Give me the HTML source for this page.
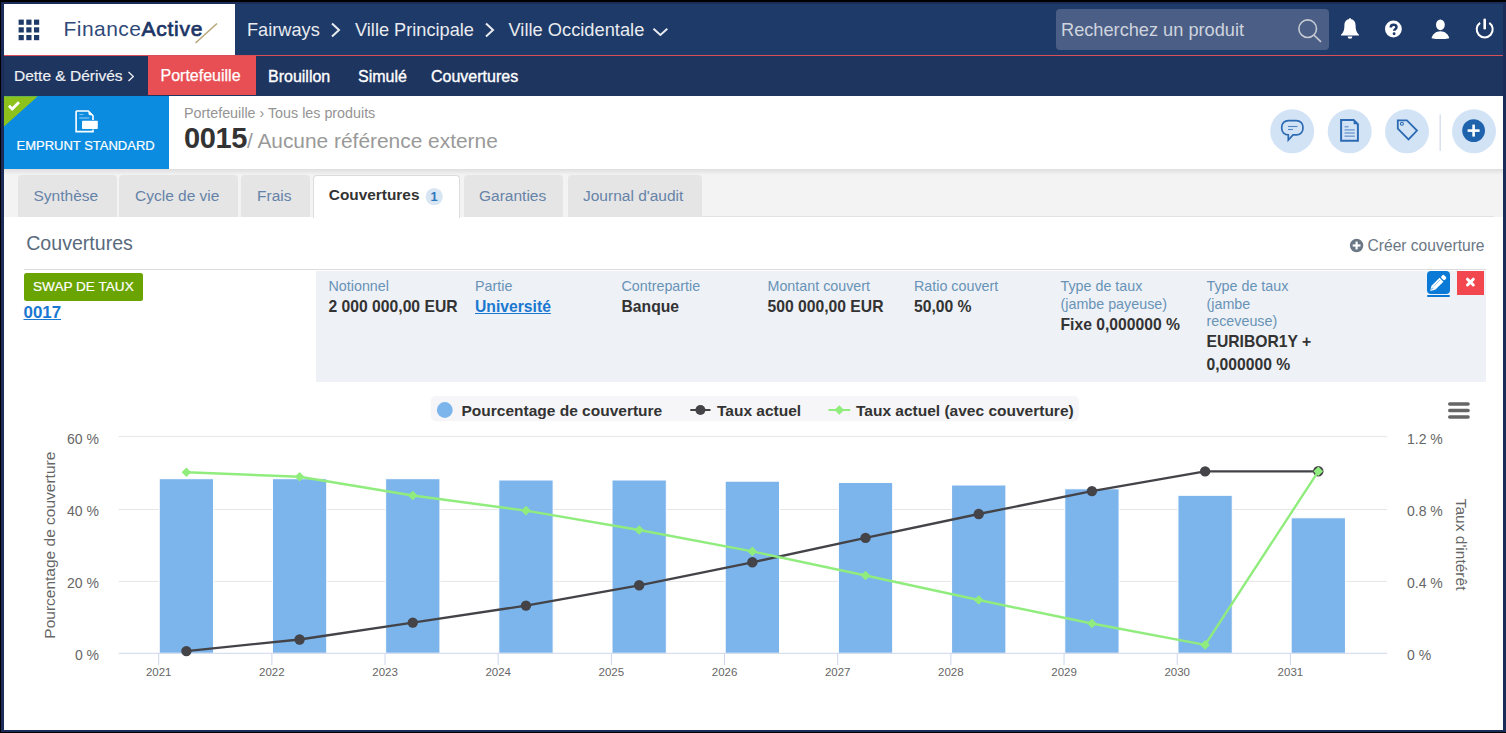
<!DOCTYPE html>
<html><head><meta charset="utf-8">
<style>
html,body{margin:0;padding:0;}
body{width:1506px;height:733px;background:#000;position:relative;overflow:hidden;font-family:"Liberation Sans",sans-serif;}
.a{position:absolute;white-space:nowrap;}
#frame{position:absolute;left:1px;top:2px;width:1505px;height:730px;background:#1b2c59;}
#page{position:absolute;left:4px;top:4px;width:1499px;height:725.5px;background:#fff;overflow:hidden;}
/* everything inside uses page coords via .p wrapper offset */
#c{position:absolute;left:-4px;top:-4px;width:1506px;height:733px;}
#hdr{position:absolute;left:0;top:0;width:1506px;height:55px;background:#1e3a68;}
#logo{position:absolute;left:0;top:0;width:234.6px;height:55px;background:#fff;}
#redline{position:absolute;left:0;top:55px;width:1506px;height:1.2px;background:#d94f57;}
#sub{position:absolute;left:0;top:56.2px;width:1506px;height:39.8px;background:#1e355f;}
#tabbar{position:absolute;left:0;top:169px;width:1506px;height:47.5px;background:#f3f3f3;}
#tabshadow{position:absolute;left:0;top:169px;width:1506px;height:6px;background:linear-gradient(#dedede,#f3f3f3);}
.tab{position:absolute;top:175px;height:41.5px;background:#e5e5e5;border-radius:4px 4px 0 0;}
.lab{font-size:14.3px;line-height:17.7px;color:#6893b6;top:278px;}
.val{font-size:15.7px;line-height:16px;color:#333;font-weight:bold;}
.tabt{position:absolute;font-size:15.5px;line-height:16px;color:#6583a8;top:188px;}
</style></head>
<body>
<div id="frame"></div>
<div id="page"><div id="c">
  <div id="hdr"></div>
  <div id="logo"></div>
  <div id="redline"></div>
  <div id="sub"></div>

  <!-- grid icon -->
  <svg class="a" style="left:0;top:0" width="60" height="55">
    <g fill="#1e3a68">
      <rect x="18.6" y="19.6" width="5.2" height="5.2"/><rect x="26.3" y="19.6" width="5.2" height="5.2"/><rect x="34" y="19.6" width="5.2" height="5.2"/>
      <rect x="18.6" y="27.3" width="5.2" height="5.2"/><rect x="26.3" y="27.3" width="5.2" height="5.2"/><rect x="34" y="27.3" width="5.2" height="5.2"/>
      <rect x="18.6" y="35" width="5.2" height="5.2"/><rect x="26.3" y="35" width="5.2" height="5.2"/><rect x="34" y="35" width="5.2" height="5.2"/>
    </g>
  </svg>
  <div class="a" style="left:63.5px;top:17.6px;font-size:21px;line-height:21px;color:#2f4a79;letter-spacing:0.45px">Finance<span style="color:#1c3565;letter-spacing:0.75px;-webkit-text-stroke:0.7px #1c3565">Active</span></div>
  <svg class="a" style="left:0;top:0" width="234" height="55"><line x1="195.5" y1="43" x2="217" y2="23.5" stroke="#b9a77a" stroke-width="1.6"/></svg>
  <div class="a" style="left:247px;top:21.2px;font-size:18.2px;line-height:18px;color:#e9ebf0">Fairways</div>
  <svg class="a" style="left:0;top:0" width="700" height="55" fill="none" stroke="#e9ebf0" stroke-width="2">
    <polyline points="332,23.5 339,30 332,36.5"/>
    <polyline points="486,23.5 493,30 486,36.5"/>
    <polyline points="653.5,28.8 660.4,35 667.3,28.8"/>
  </svg>
  <div class="a" style="left:355px;top:21.2px;font-size:18.2px;line-height:18px;color:#e9ebf0">Ville Principale</div>
  <div class="a" style="left:508.5px;top:21.2px;font-size:18.3px;line-height:18px;color:#e9ebf0">Ville Occidentale</div>
  <!-- search -->
  <div class="a" style="left:1055.5px;top:9.3px;width:273.5px;height:40.5px;background:#4b5f86;border-radius:4px"></div>
  <div class="a" style="left:1061px;top:21.2px;font-size:18.2px;line-height:18px;color:#cfd4de">Recherchez un produit</div>
  <svg class="a" style="left:1290px;top:10px" width="40" height="40" fill="none" stroke="#c5c9d2" stroke-width="1.4">
    <circle cx="17.7" cy="18.7" r="8.8" stroke-width="1.6"/><line x1="23.8" y1="25" x2="31" y2="31.8" stroke-width="1.7"/>
  </svg>
  <!-- bell -->
  <svg class="a" style="left:1336px;top:14px" width="28" height="28" fill="#fff">
    <path d="M14 4.2c0.7 0 1.2 0.5 1.2 1.1c3.2 0.6 4.4 3.2 4.4 6.3c0 4.2 0.8 6.9 3.4 9.2v0.6H5v-0.6c2.6-2.3 3.4-5 3.4-9.2c0-3.1 1.2-5.7 4.4-6.3c0-0.6 0.5-1.1 1.2-1.1z"/>
    <path d="M11.6 22.4h4.8a2.4 2.4 0 0 1-4.8 0z"/>
  </svg>
  <!-- help -->
  <svg class="a" style="left:1380px;top:16px" width="28" height="28">
    <circle cx="13.4" cy="13" r="8.4" fill="#fff"/>
    <path d="M10.7 11.6c0-1.9 1.2-2.9 2.9-2.9c1.7 0 2.9 1 2.9 2.5c0 1.9-2.4 2-2.4 3.6" fill="none" stroke="#1e3a68" stroke-width="2.5"/>
    <circle cx="14.1" cy="17.7" r="1.45" fill="#1e3a68"/>
  </svg>
  <!-- user -->
  <svg class="a" style="left:1426px;top:15px" width="30" height="28" fill="#fff">
    <ellipse cx="14.4" cy="9.8" rx="4.4" ry="5.4"/>
    <path d="M5.5 23.2c1-4.2 4.6-7 8.9-7s7.9 2.8 8.9 7c-2.6 0.6-5.6 0.9-8.9 0.9s-6.3-0.3-8.9-0.9z"/>
  </svg>
  <!-- power -->
  <svg class="a" style="left:1470px;top:14px" width="30" height="30" fill="none" stroke="#fff">
    <path d="M10.11 8.85A8 8 0 1 0 19.29 8.85" stroke-width="2"/>
    <line x1="14.7" y1="5.8" x2="14.7" y2="14.3" stroke-width="2.6" stroke-linecap="round"/>
  </svg>
  <!-- subnav -->
  <div class="a" style="left:148px;top:56.2px;width:108px;height:38.6px;background:#e84f55"></div>
  <div class="a" style="left:14px;top:68px;font-size:15.5px;line-height:16px;color:#eef0f4;-webkit-text-stroke:0.2px #eef0f4">Dette &amp; Dérivés</div>
  <svg class="a" style="left:0;top:56px" width="200" height="40" fill="none" stroke="#eef0f4" stroke-width="1.3"><polyline points="128.5,16 133.3,20.5 128.5,25"/></svg>
  <div class="a" style="left:160.5px;top:68px;font-size:16px;line-height:16px;color:#fff;-webkit-text-stroke:0.25px #fff">Portefeuille</div>
  <div class="a" style="left:268px;top:68.5px;font-size:16px;line-height:16px;color:#fff;-webkit-text-stroke:0.35px #fff;letter-spacing:0px">Brouillon</div>
  <div class="a" style="left:358px;top:68.5px;font-size:16px;line-height:16px;color:#fff;-webkit-text-stroke:0.35px #fff;letter-spacing:0px">Simulé</div>
  <div class="a" style="left:431px;top:68.5px;font-size:16px;line-height:16px;color:#fff;-webkit-text-stroke:0.35px #fff;letter-spacing:0px">Couvertures</div>

  <!-- page header -->
  <div class="a" style="left:0;top:95.8px;width:169px;height:73.2px;background:#0b8ce0"></div>
  <svg class="a" style="left:0;top:95.5px" width="169" height="74">
    <polygon points="0,0.3 37.8,0.3 0,34" fill="#8cc21b"/>
    <polyline points="9,9.8 12.2,13 19,6.2" fill="none" stroke="#fff" stroke-width="2.8"/>
    <g fill="none" stroke="#fff" stroke-width="1.6">
      <path d="M76.1 15h12.2l4.7 4.8v4.2M93 33.5v2.1H76.1V15"/>
    </g>
    <rect x="82" y="24.7" width="15.8" height="8.4" rx="0.8" fill="#fff"/>
    <path d="M88.5 14.6l4.6 4.6h-3.2a1.4 1.4 0 0 1-1.4-1.4z" fill="#fff"/>
    <line x1="79.3" y1="18.5" x2="83.5" y2="18.5" stroke="#fff" stroke-opacity="0.45" stroke-width="1.1"/>
    <line x1="79.3" y1="22" x2="89.3" y2="22" stroke="#fff" stroke-opacity="0.55" stroke-width="1.1"/>
  </svg>
  <div class="a" style="left:16.5px;top:138.5px;font-size:13px;line-height:13px;color:#fff;-webkit-text-stroke:0.2px #fff">EMPRUNT STANDARD</div>
  <div class="a" style="left:184px;top:105.5px;font-size:14.3px;line-height:14px;color:#949494">Portefeuille › Tous les produits</div>
  <div class="a" style="left:184px;top:124.2px;font-size:29px;line-height:28px;color:#333;font-weight:bold;letter-spacing:-0.4px">0015<span style="font-weight:normal;font-size:20.9px;color:#999;letter-spacing:0">/ Aucune référence externe</span></div>
  <!-- action buttons -->
  <svg class="a" style="left:1260px;top:100px" width="246" height="62">
    <g fill="#d3e3f6">
      <circle cx="32.2" cy="31.3" r="22"/><circle cx="89.7" cy="31.3" r="22"/><circle cx="147" cy="31.3" r="22"/><circle cx="214" cy="31.3" r="22"/>
    </g>
    <line x1="180.2" y1="14.6" x2="180.2" y2="50.9" stroke="#cfdbe8" stroke-width="1.2"/>
    <g fill="none" stroke="#2c6bb4" stroke-width="1.7" stroke-linejoin="miter">
      <path d="M28.25 20.55H36.45A6.5 6.5 0 0 1 42.95 27.05V28.45A6.5 6.5 0 0 1 36.45 34.95H33L28.3 40V34.95H28.25A6.5 6.5 0 0 1 21.75 28.45V27.05A6.5 6.5 0 0 1 28.25 20.55Z"/>
      <path d="M81.1 19.9h12.5l4.3 4.3v16.6h-16.8z" stroke-width="2"/>
      <path d="M137.8 20.4h9.1l10.1 10.2l-8.5 8.8l-10.7-10.7z" stroke-width="1.8"/>
      <circle cx="141.9" cy="23.7" r="1.5" stroke-width="1.1"/>
    </g>
    <path d="M93.6 19.9l4.3 4.3h-4.3z" fill="#2c6bb4"/>
    <g stroke="#2c6bb4" stroke-width="1.1" stroke-opacity="0.8"><line x1="28" y1="26.5" x2="37.5" y2="26.5"/><line x1="28" y1="29.5" x2="32.9" y2="29.5"/></g>
    <g stroke="#5f8fcb" stroke-width="1.6" stroke-opacity="0.75">
      <line x1="84.5" y1="26.7" x2="88.6" y2="26.7"/><line x1="84.5" y1="29.9" x2="94.8" y2="29.9"/><line x1="84.5" y1="33" x2="94.8" y2="33"/><line x1="84.5" y1="36.2" x2="94.8" y2="36.2"/>
    </g>
    <circle cx="213.6" cy="30.6" r="11.4" fill="#1f63ad"/>
    <g stroke="#fff" stroke-width="2.6"><line x1="213.6" y1="24.6" x2="213.6" y2="36.6"/><line x1="207.6" y1="30.6" x2="219.6" y2="30.6"/></g>
  </svg>
  <!-- tabs -->
  <div id="tabbar"></div>
  <div id="tabshadow"></div>
  <div class="a" style="left:701.6px;top:215.6px;width:792px;height:1.2px;background:#e2e2e2"></div>
  <div class="tab" style="left:17.7px;width:99px"></div>
  <div class="tab" style="left:118.9px;width:119px"></div>
  <div class="tab" style="left:241px;width:68.6px"></div>
  <div class="tab" style="left:312.5px;width:147px;background:#fff;border:1px solid #dcdcdc;border-bottom:none;height:43px;top:174.5px;box-sizing:border-box"></div>
  <div class="tab" style="left:463.7px;width:99.8px"></div>
  <div class="tab" style="left:567.7px;width:133.9px"></div>
  <div class="tabt" style="left:33.5px">Synthèse</div>
  <div class="tabt" style="left:135px">Cycle de vie</div>
  <div class="tabt" style="left:257px">Frais</div>
  <div class="tabt" style="left:328.8px;top:187.2px;color:#333;font-weight:bold;font-size:15.4px">Couvertures</div>
  <svg class="a" style="left:420px;top:185px" width="30" height="24"><circle cx="14.2" cy="11.7" r="8.6" fill="#d8e5f3"/><text x="14" y="16.3" font-size="13" font-weight="bold" text-anchor="middle" fill="#2f78bd" font-family="Liberation Sans">1</text></svg>
  <div class="tabt" style="left:479px">Garanties</div>
  <div class="tabt" style="left:583px">Journal d'audit</div>

  <!-- section -->
  <div class="a" style="left:26.2px;top:232.8px;font-size:19.6px;line-height:20px;color:#5a6a7d">Couvertures</div>
  <svg class="a" style="left:1340px;top:232px" width="30" height="28"><circle cx="16.6" cy="13.5" r="6.7" fill="#6b7785"/><g stroke="#fff" stroke-width="2.2"><line x1="16.6" y1="9.6" x2="16.6" y2="17.4"/><line x1="12.7" y1="13.5" x2="20.5" y2="13.5"/></g></svg>
  <div class="a" style="left:1367.5px;top:238px;font-size:15.6px;line-height:16px;color:#6b7785">Créer couverture</div>
  <div class="a" style="left:23.8px;top:269px;width:1462.2px;height:1px;background:#dcdcdc"></div>
  <div class="a" style="left:316px;top:271px;width:1170px;height:111px;background:#eef1f6"></div>
  <div class="a" style="left:23.8px;top:273px;width:119.4px;height:28px;background:#6aa402;border-radius:2.5px"></div>
  <div class="a" style="left:33px;top:280px;font-size:13.6px;line-height:14px;color:#fff;-webkit-text-stroke:0.2px #fff">SWAP DE TAUX</div>
  <div class="a" style="left:23.5px;top:304.3px;font-size:16.9px;line-height:17px;color:#1a78d0;font-weight:bold;text-decoration:underline">0017</div>
  <div class="lab a" style="left:328.5px">Notionnel</div>
  <div class="val a" style="left:328.5px;top:298.8px">2 000 000,00 EUR</div>
  <div class="lab a" style="left:475px">Partie</div>
  <div class="val a" style="left:475px;top:298.8px;color:#1a78d0;text-decoration:underline">Université</div>
  <div class="lab a" style="left:621.5px">Contrepartie</div>
  <div class="val a" style="left:621.5px;top:298.8px">Banque</div>
  <div class="lab a" style="left:767.5px">Montant couvert</div>
  <div class="val a" style="left:767.5px;top:298.8px">500 000,00 EUR</div>
  <div class="lab a" style="left:914px">Ratio couvert</div>
  <div class="val a" style="left:914px;top:298.8px">50,00 %</div>
  <div class="lab a" style="left:1060.5px">Type de taux<br>(jambe payeuse)</div>
  <div class="val a" style="left:1060.5px;top:316.8px">Fixe 0,000000 %</div>
  <div class="lab a" style="left:1206.5px">Type de taux<br>(jambe<br>receveuse)</div>
  <div class="val a" style="left:1206.5px;top:330px;line-height:23.1px">EURIBOR1Y +<br>0,000000 %</div>
  <!-- edit / delete -->
  <div class="a" style="left:1426.7px;top:271.2px;width:23.3px;height:23px;background:#0a7ad6;border-radius:4px"></div>
  <div class="a" style="left:1426.7px;top:295.1px;width:23.3px;height:1.8px;background:#0a78d4;border-radius:1px"></div>
  <svg class="a" style="left:1426px;top:271px" width="24" height="24">
    <g transform="translate(4.3,19.9) rotate(-45)" fill="#fff">
      <polygon points="0,0 4.2,-2.75 4.2,2.75"/>
      <rect x="4.2" y="-2.75" width="11.6" height="5.5"/>
      <rect x="17" y="-2.6" width="3.9" height="5.2" rx="1.6"/>
      <line x1="5.5" y1="-0.9" x2="14.5" y2="-0.9" stroke="#6fb0ea" stroke-width="0.7"/>
      <line x1="1.8" y1="-0.3" x2="3.4" y2="-0.3" stroke="#3b8fdc" stroke-width="1"/>
    </g>
  </svg>
  <div class="a" style="left:1457px;top:271.1px;width:26.9px;height:23.9px;background:#f2474f"></div>
  <svg class="a" style="left:1457px;top:271px" width="27" height="24"><g stroke="#fff" stroke-width="3" stroke-linecap="round"><line x1="10.5" y1="8.2" x2="16.3" y2="14"/><line x1="16.3" y1="8.2" x2="10.5" y2="14"/></g></svg>
<!-- chart -->
<svg class="a" style="left:0;top:0" width="1506" height="733" font-family="Liberation Sans">
<rect x="430.8" y="396" width="648.1" height="25.3" rx="5" fill="#f6f6f8"/>
<circle cx="444.8" cy="410" r="7.9" fill="#7cb5ec"/>
<g font-size="15.5" font-weight="bold" fill="#333">
<text x="461.5" y="415.7">Pourcentage de couverture</text>
<text x="717" y="415.7">Taux actuel</text>
<text x="856" y="415.7">Taux actuel (avec couverture)</text>
</g>
<line x1="690.3" y1="410" x2="710.5" y2="410" stroke="#434348" stroke-width="2"/><circle cx="700.4" cy="410" r="5" fill="#434348"/>
<line x1="828.4" y1="410" x2="850.2" y2="410" stroke="#90ed7d" stroke-width="2"/><path d="M839.3 405.2l4.8 4.8l-4.8 4.8l-4.8-4.8z" fill="#90ed7d"/>
<g stroke="#666" stroke-width="3.4" stroke-linecap="round"><line x1="1449.7" y1="404" x2="1468.1" y2="404"/><line x1="1449.7" y1="410.5" x2="1468.1" y2="410.5"/><line x1="1449.7" y1="417" x2="1468.1" y2="417"/></g>
<line x1="118.7" y1="436.6" x2="1387" y2="436.6" stroke="#e6e6e6" stroke-width="1"/>
<line x1="118.7" y1="509.5" x2="1387" y2="509.5" stroke="#e6e6e6" stroke-width="1"/>
<line x1="118.7" y1="581.4" x2="1387" y2="581.4" stroke="#e6e6e6" stroke-width="1"/>
<rect x="159.25" y="478.70" width="54.30" height="174.60" fill="#7cb5ec" stroke="#fff" stroke-width="1"/>
<rect x="272.44" y="478.70" width="54.30" height="174.60" fill="#7cb5ec" stroke="#fff" stroke-width="1"/>
<rect x="385.63" y="478.70" width="54.30" height="174.60" fill="#7cb5ec" stroke="#fff" stroke-width="1"/>
<rect x="498.82" y="480.00" width="54.30" height="173.30" fill="#7cb5ec" stroke="#fff" stroke-width="1"/>
<rect x="612.01" y="480.00" width="54.30" height="173.30" fill="#7cb5ec" stroke="#fff" stroke-width="1"/>
<rect x="725.20" y="481.20" width="54.30" height="172.10" fill="#7cb5ec" stroke="#fff" stroke-width="1"/>
<rect x="838.39" y="482.50" width="54.30" height="170.80" fill="#7cb5ec" stroke="#fff" stroke-width="1"/>
<rect x="951.58" y="485.00" width="54.30" height="168.30" fill="#7cb5ec" stroke="#fff" stroke-width="1"/>
<rect x="1064.77" y="488.80" width="54.30" height="164.50" fill="#7cb5ec" stroke="#fff" stroke-width="1"/>
<rect x="1177.96" y="495.30" width="54.30" height="158.00" fill="#7cb5ec" stroke="#fff" stroke-width="1"/>
<rect x="1291.15" y="517.80" width="54.30" height="135.50" fill="#7cb5ec" stroke="#fff" stroke-width="1"/>
<line x1="118.7" y1="653.3" x2="1387" y2="653.3" stroke="#ccd6eb" stroke-width="1"/>
<line x1="158.70" y1="653.3" x2="158.70" y2="665" stroke="#ccd6eb" stroke-width="1"/>
<text x="158.70" y="676.4" font-size="11.5" fill="#666" text-anchor="middle">2021</text>
<line x1="271.87" y1="653.3" x2="271.87" y2="665" stroke="#ccd6eb" stroke-width="1"/>
<text x="271.87" y="676.4" font-size="11.5" fill="#666" text-anchor="middle">2022</text>
<line x1="385.04" y1="653.3" x2="385.04" y2="665" stroke="#ccd6eb" stroke-width="1"/>
<text x="385.04" y="676.4" font-size="11.5" fill="#666" text-anchor="middle">2023</text>
<line x1="498.21" y1="653.3" x2="498.21" y2="665" stroke="#ccd6eb" stroke-width="1"/>
<text x="498.21" y="676.4" font-size="11.5" fill="#666" text-anchor="middle">2024</text>
<line x1="611.38" y1="653.3" x2="611.38" y2="665" stroke="#ccd6eb" stroke-width="1"/>
<text x="611.38" y="676.4" font-size="11.5" fill="#666" text-anchor="middle">2025</text>
<line x1="724.55" y1="653.3" x2="724.55" y2="665" stroke="#ccd6eb" stroke-width="1"/>
<text x="724.55" y="676.4" font-size="11.5" fill="#666" text-anchor="middle">2026</text>
<line x1="837.72" y1="653.3" x2="837.72" y2="665" stroke="#ccd6eb" stroke-width="1"/>
<text x="837.72" y="676.4" font-size="11.5" fill="#666" text-anchor="middle">2027</text>
<line x1="950.89" y1="653.3" x2="950.89" y2="665" stroke="#ccd6eb" stroke-width="1"/>
<text x="950.89" y="676.4" font-size="11.5" fill="#666" text-anchor="middle">2028</text>
<line x1="1064.06" y1="653.3" x2="1064.06" y2="665" stroke="#ccd6eb" stroke-width="1"/>
<text x="1064.06" y="676.4" font-size="11.5" fill="#666" text-anchor="middle">2029</text>
<line x1="1177.23" y1="653.3" x2="1177.23" y2="665" stroke="#ccd6eb" stroke-width="1"/>
<text x="1177.23" y="676.4" font-size="11.5" fill="#666" text-anchor="middle">2030</text>
<line x1="1290.40" y1="653.3" x2="1290.40" y2="665" stroke="#ccd6eb" stroke-width="1"/>
<text x="1290.40" y="676.4" font-size="11.5" fill="#666" text-anchor="middle">2031</text>
<text x="99" y="444.1" font-size="14" fill="#666" text-anchor="end">60 %</text>
<text x="1407" y="444.1" font-size="14" fill="#666">1.2 %</text>
<text x="99" y="516.2" font-size="14" fill="#666" text-anchor="end">40 %</text>
<text x="1407" y="516.2" font-size="14" fill="#666">0.8 %</text>
<text x="99" y="588.3" font-size="14" fill="#666" text-anchor="end">20 %</text>
<text x="1407" y="588.3" font-size="14" fill="#666">0.4 %</text>
<text x="99" y="660.4" font-size="14" fill="#666" text-anchor="end">0 %</text>
<text x="1407" y="660.4" font-size="14" fill="#666">0 %</text>
<text transform="translate(54.5,545.2) rotate(-90)" font-size="15.5" fill="#666" text-anchor="middle">Pourcentage de couverture</text>
<text transform="translate(1456.4,544.6) rotate(90)" font-size="15.5" fill="#666" text-anchor="middle">Taux d'intérêt</text>
<polyline points="186.40,651.1 299.59,639.5 412.78,622.6 525.97,605.6 639.16,585.3 752.35,562.3 865.54,537.9 978.73,514 1091.92,491.1 1205.11,471.4 1318.30,471.3" fill="none" stroke="#434348" stroke-width="2.3" stroke-linejoin="round"/>
<circle cx="186.40" cy="651.1" r="5.2" fill="#434348"/>
<circle cx="299.59" cy="639.5" r="5.2" fill="#434348"/>
<circle cx="412.78" cy="622.6" r="5.2" fill="#434348"/>
<circle cx="525.97" cy="605.6" r="5.2" fill="#434348"/>
<circle cx="639.16" cy="585.3" r="5.2" fill="#434348"/>
<circle cx="752.35" cy="562.3" r="5.2" fill="#434348"/>
<circle cx="865.54" cy="537.9" r="5.2" fill="#434348"/>
<circle cx="978.73" cy="514" r="5.2" fill="#434348"/>
<circle cx="1091.92" cy="491.1" r="5.2" fill="#434348"/>
<circle cx="1205.11" cy="471.4" r="5.2" fill="#434348"/>
<circle cx="1318.30" cy="471.3" r="5.2" fill="#434348"/>
<polyline points="186.40,472.3 299.59,476.7 412.78,495.5 525.97,510.6 639.16,530 752.35,551.4 865.54,575.5 978.73,600 1091.92,623.5 1205.11,644.9 1318.30,471.3" fill="none" stroke="#90ed7d" stroke-width="2.4" stroke-linejoin="round"/>
<path d="M186.40 467.50l4.8 4.8l-4.8 4.8l-4.8-4.8z" fill="#90ed7d"/>
<path d="M299.59 471.90l4.8 4.8l-4.8 4.8l-4.8-4.8z" fill="#90ed7d"/>
<path d="M412.78 490.70l4.8 4.8l-4.8 4.8l-4.8-4.8z" fill="#90ed7d"/>
<path d="M525.97 505.80l4.8 4.8l-4.8 4.8l-4.8-4.8z" fill="#90ed7d"/>
<path d="M639.16 525.20l4.8 4.8l-4.8 4.8l-4.8-4.8z" fill="#90ed7d"/>
<path d="M752.35 546.60l4.8 4.8l-4.8 4.8l-4.8-4.8z" fill="#90ed7d"/>
<path d="M865.54 570.70l4.8 4.8l-4.8 4.8l-4.8-4.8z" fill="#90ed7d"/>
<path d="M978.73 595.20l4.8 4.8l-4.8 4.8l-4.8-4.8z" fill="#90ed7d"/>
<path d="M1091.92 618.70l4.8 4.8l-4.8 4.8l-4.8-4.8z" fill="#90ed7d"/>
<path d="M1205.11 640.10l4.8 4.8l-4.8 4.8l-4.8-4.8z" fill="#90ed7d"/>
<path d="M1318.30 466.50l4.8 4.8l-4.8 4.8l-4.8-4.8z" fill="#90ed7d"/>
</svg>
<!-- /chart -->
</div></div>
</body></html>
